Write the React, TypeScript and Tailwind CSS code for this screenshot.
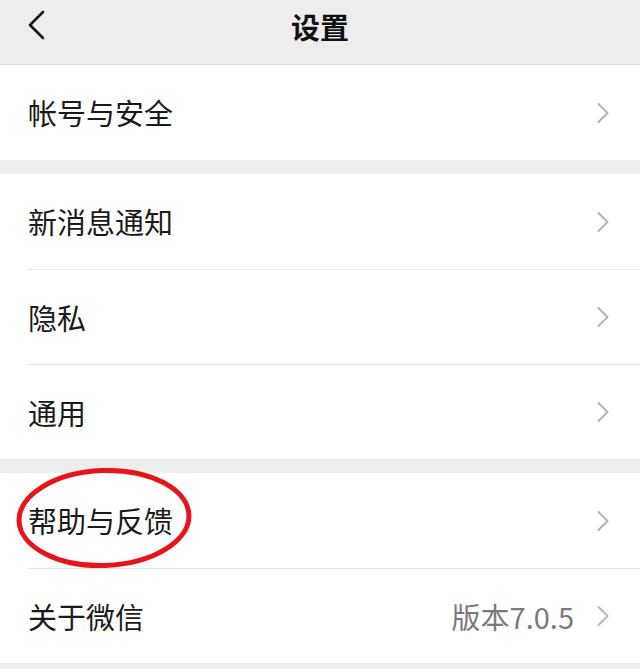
import React from "react";

const font = { fontFamily: '"Noto Sans CJK SC", "Noto Sans", sans-serif' };

function Chevron() {
  return (
    <svg width="14" height="22" viewBox="0 0 14 22" className="shrink-0">
      <path d="M2.5 2 L11.5 11 L2.5 20" fill="none" stroke="#b4b4b4" strokeWidth="2" strokeLinecap="round" strokeLinejoin="round" />
    </svg>
  );
}

function Row({ label, value, first }: { label: string; value?: string; first?: boolean }) {
  return (
    <div className="bg-white h-[95px] pl-[28px]">
      <div className={`h-full flex items-center pr-[30px] ${first ? "" : "border-t border-[#e5e5e5]"}`}>
        <span className="text-[29px] text-[#1a1a1a] leading-none flex-1">{label}</span>
        {value && <span className="text-[29px] text-[#7a7a7a] leading-none mr-[22px]">{value}</span>}
        <Chevron />
      </div>
    </div>
  );
}

export default function App() {
  return (
    <div className="relative w-[640px] h-[669px] bg-[#ededed] overflow-hidden" style={font}>
      <div className="h-[65px] flex items-center justify-center relative border-b border-[#d9d9d9]">
        <svg width="20" height="32" viewBox="0 0 20 32" className="absolute left-[27px] top-[10px]">
          <path d="M16 2 L3 15 L16 28" fill="none" stroke="#111" strokeWidth="2.6" strokeLinecap="round" strokeLinejoin="round" />
        </svg>
        <span className="text-[29px] font-semibold text-[#111] leading-none -mt-[12px]">设置</span>
      </div>
      <Row label="帐号与安全" first />
      <div className="h-[14px]" />
      <Row label="新消息通知" first />
      <Row label="隐私" />
      <Row label="通用" />
      <div className="h-[14px]" />
      <Row label="帮助与反馈" first />
      <Row label="关于微信" value="版本7.0.5" />
      <svg className="absolute left-[14px] top-[466px]" width="180" height="104" viewBox="0 0 180 104">
        <ellipse cx="90" cy="52" rx="85" ry="47.5" fill="none" stroke="#e8141a" strokeWidth="5" transform="rotate(-2 90 52)" />
      </svg>
    </div>
  );
}
